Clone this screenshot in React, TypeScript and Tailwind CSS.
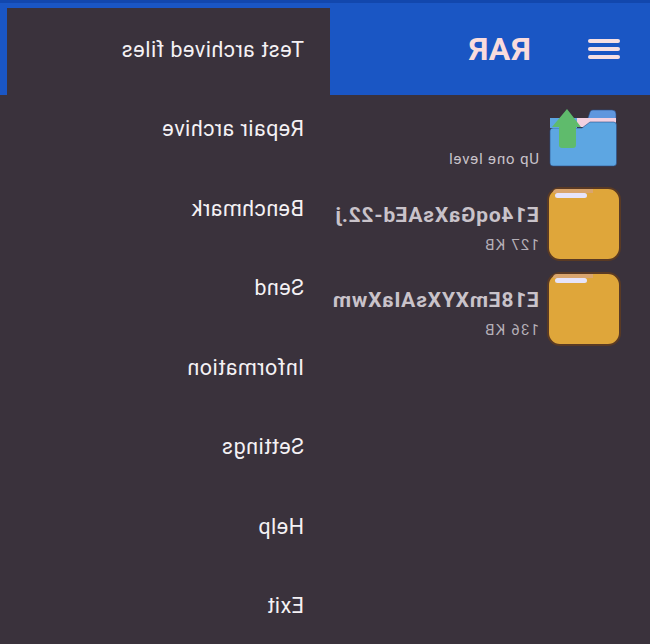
const menuItems = [
  'Test archived files',
  'Repair archive',
  'Benchmark',
  'Send',
  'Information',
  'Settings',
  'Help',
  'Exit',
]

// only the part of each name that shows beside the open menu
const files = [
  { name: 'E14oqGaXsAEd-22.j', size: '127 KB' },
  { name: 'E18EmXYXsAIaXwm', size: '136 KB' },
]

const UpFolderIcon = () => (
  <svg width="70" height="60" viewBox="0 0 70 60" className="shrink-0">
    <path d="M2 13 V6 a4 4 0 0 1 4 -4 H25 a3 3 0 0 1 3 2 l3 9 Z" fill="#5f97de" stroke="#2c4f86" strokeWidth="0.6" />
    <path d="M2 10 H41 V19 H2 Z" fill="#f3d0e0" />
    <path d="M1.5 17 a3 3 0 0 1 3 -3 H28 L36 20 H65 a3 3 0 0 1 3 3 V55 a3 3 0 0 1 -3 3 H4.5 a3 3 0 0 1 -3 -3 Z" fill="#5da6e2" stroke="#2c4f86" strokeWidth="0.6" />
    <path d="M41 10 H68 V20 H41 Z" fill="#5da6e2" />
    <path d="M51 1 L66 19 H59 V37 a3 3 0 0 1 -3 3 H45 a3 3 0 0 1 -3 -3 V19 H37 Z" fill="#5fbb6c" />
  </svg>
)

const FileFolderIcon = () => (
  <div className="relative h-[74px] w-[74px] shrink-0 rounded-[13px] border-2 border-[#5a3a24] bg-[#dfa63a]">
    <div className="absolute right-[4px] top-0 h-[4px] w-[40px] rounded-tr-[10px] bg-[#d9a56d]" />
    <div className="absolute left-[32px] top-[4px] h-[5px] w-[32px] rounded-[3px] bg-[#e6e4fa]" />
  </div>
)

export default function App() {
  return (
    <div className="relative h-[644px] w-[650px] -scale-x-100 overflow-hidden bg-[#3a323c] font-['Roboto',sans-serif]">
      <header className="flex h-[95px] items-center gap-[57px] border-t-[3px] border-[#1247ad] bg-[#1a56c4] pl-[30px]">
        <div className="flex w-[32px] flex-col gap-[4px]">
          <span className="h-[4px] rounded-sm bg-[#f7dfe2]" />
          <span className="h-[4px] rounded-sm bg-[#f7dfe2]" />
          <span className="h-[4px] rounded-sm bg-[#f7dfe2]" />
        </div>
        <h1 className="text-[32px] font-bold leading-none tracking-[0.3px] text-[#f9dcdd]">RAR</h1>
      </header>

      <div className="flex items-end gap-[9px] pl-[32px] pt-[13px]">
        <UpFolderIcon />
        <span className="pb-[1px] text-[15px] leading-none tracking-[0.85px] text-[#c9c3ca]">Up one level</span>
      </div>

      <div className="mt-[19px] flex w-[320px] flex-col gap-[11px] pl-[29px]">
        {files.map((file) => (
          <div key={file.name} className="flex items-start gap-[8px]">
            <FileFolderIcon />
            <div className="min-w-0 flex-1 pt-[16px]">
              <p className="whitespace-nowrap text-[21px] font-bold leading-[24px] tracking-[0.8px] text-[#c9c3ca]">
                {file.name}
              </p>
              <p className="mt-[9px] text-[15px] leading-[18px] tracking-[1.2px] text-[#b5afb7]">{file.size}</p>
            </div>
          </div>
        ))}
      </div>

      <nav className="absolute bottom-0 right-[7px] top-[8px] flex w-[323px] flex-col bg-[#3a323c]">
        {menuItems.map((item) => (
          <div key={item} className="flex h-[79.6px] items-center pl-[26px] pt-[4px] text-[21.5px] tracking-[0.5px] text-[#f4f1f4]">
            {item}
          </div>
        ))}
      </nav>
    </div>
  )
}
